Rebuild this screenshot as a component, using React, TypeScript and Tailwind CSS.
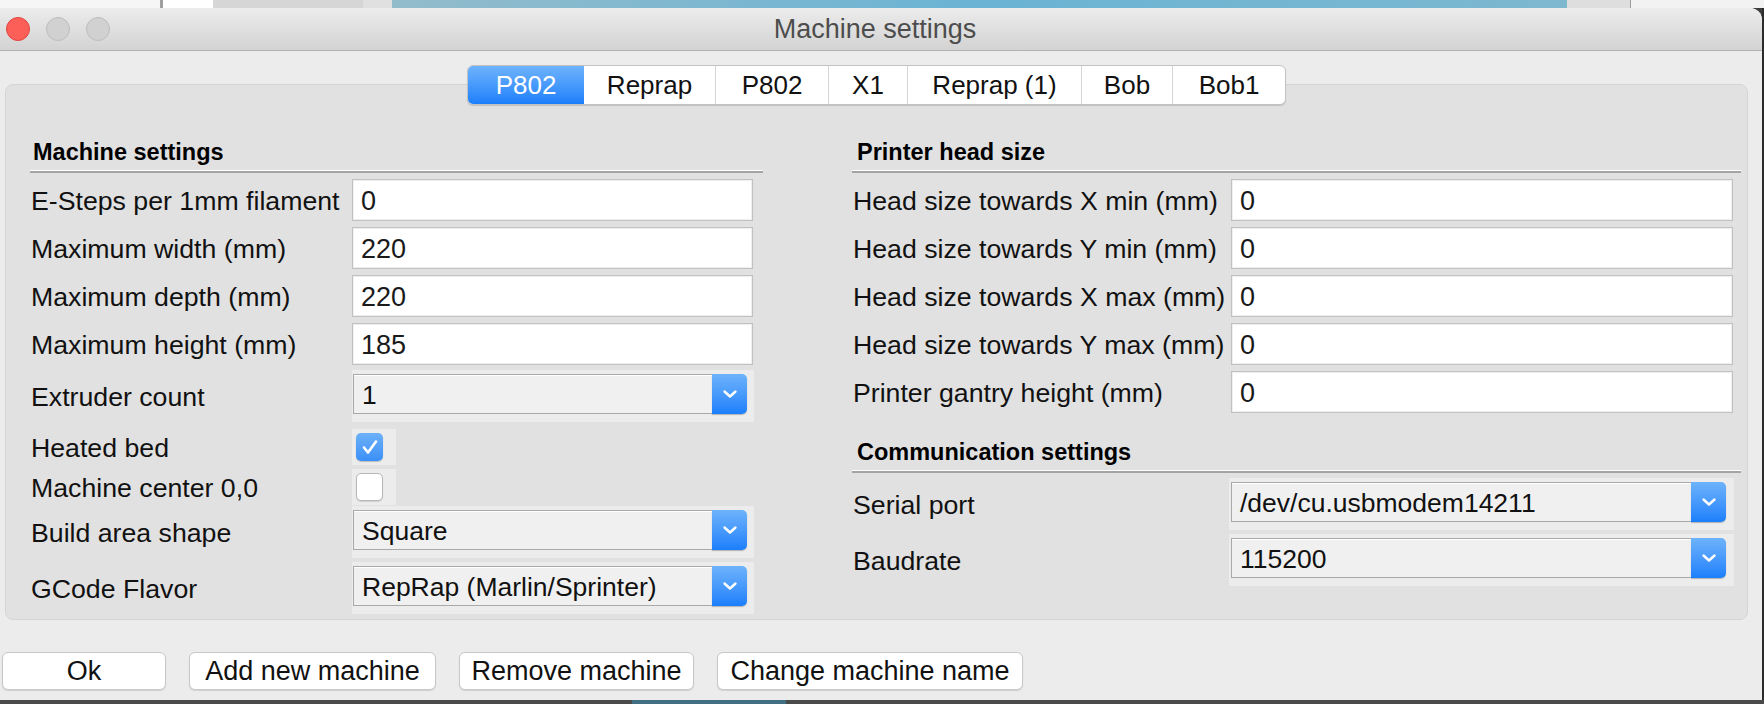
import type { ReactNode } from 'react'

type Row =
  | { kind: 'field'; label: string; value: string }
  | { kind: 'select'; label: string; value: string }
  | { kind: 'check'; label: string; checked: boolean }

const tabs = [
  { name: 'P802', width: 'w-[116px]', active: true },
  { name: 'Reprap', width: 'w-[131px]' },
  { name: 'P802', width: 'w-[113px]' },
  { name: 'X1', width: 'w-[79px]' },
  { name: 'Reprap (1)', width: 'w-[174px]' },
  { name: 'Bob', width: 'w-[91px]' },
  { name: 'Bob1', width: 'w-[113px]' },
]

const machineRows: Row[] = [
  { kind: 'field', label: 'E-Steps per 1mm filament', value: '0' },
  { kind: 'field', label: 'Maximum width (mm)', value: '220' },
  { kind: 'field', label: 'Maximum depth (mm)', value: '220' },
  { kind: 'field', label: 'Maximum height (mm)', value: '185' },
  { kind: 'select', label: 'Extruder count', value: '1' },
  { kind: 'check', label: 'Heated bed', checked: true },
  { kind: 'check', label: 'Machine center 0,0', checked: false },
  { kind: 'select', label: 'Build area shape', value: 'Square' },
  { kind: 'select', label: 'GCode Flavor', value: 'RepRap (Marlin/Sprinter)' },
]

const headRows = [
  { label: 'Head size towards X min (mm)', value: '0' },
  { label: 'Head size towards Y min (mm)', value: '0' },
  { label: 'Head size towards X max (mm)', value: '0' },
  { label: 'Head size towards Y max (mm)', value: '0' },
  { label: 'Printer gantry height (mm)', value: '0' },
]

function Chevron() {
  return (
    <svg width="16" height="10" viewBox="0 0 16 10">
      <path
        d="M2.5 2.5l5.5 5 5.5-5"
        fill="none"
        stroke="white"
        strokeWidth="2.4"
        strokeLinecap="round"
        strokeLinejoin="round"
      />
    </svg>
  )
}

function TextField({ value, className }: { value: string; className: string }) {
  return (
    <div
      className={`h-[42px] bg-white border border-[#c1c1c1] shadow-[inset_0_0_0_1px_#efefef] flex items-center pl-[8px] pt-[3px] text-[27px] text-[#1a1a1a] ${className}`}
    >
      {value}
    </div>
  )
}

function Select({ value, className }: { value: string; className: string }) {
  return (
    <div className={`flex h-[40px] ${className}`}>
      <div className="flex-1 flex items-center pl-[8px] pt-[4px] bg-[#f0f0f0] border border-r-0 border-[#a9a9a9] shadow-[inset_0_1px_0_#ffffff] text-[26.5px] text-[#111] whitespace-nowrap">
        {value}
      </div>
      <div className="w-[35px] flex items-center justify-center rounded-r-[5px] bg-linear-to-b from-[#6db3fb] to-[#1a7ffb] shadow-[0_1px_1px_rgba(0,0,0,0.25)]">
        <Chevron />
      </div>
    </div>
  )
}

function Checkbox({ checked }: { checked: boolean }) {
  if (checked) {
    return (
      <div className="w-[27px] h-[28px] rounded-[5px] bg-linear-to-b from-[#6cb1f9] to-[#3a8ff6] flex items-center justify-center shadow-[0_1px_1px_rgba(0,0,0,0.2)]">
        <svg width="20" height="20" viewBox="0 0 20 20">
          <path
            d="M4 10.5l4 5 8-11"
            fill="none"
            stroke="white"
            strokeWidth="2.6"
            strokeLinecap="round"
            strokeLinejoin="round"
          />
        </svg>
      </div>
    )
  }
  return (
    <div className="w-[27px] h-[28px] rounded-[5px] bg-white border border-[#b7b7b7] shadow-[0_1px_1px_rgba(0,0,0,0.12)]" />
  )
}

function SectionHeading({ title, className }: { title: string; className: string }) {
  return (
    <div className="flex flex-col">
      <div className={`h-[28px] leading-[28px] text-[23.5px] font-bold text-black ${className}`}>
        {title}
      </div>
      <div className="mt-[4px] h-px bg-white" />
      <div className="h-[2px] bg-[#a4a4a4]" />
    </div>
  )
}

function Label({ children }: { children: ReactNode }) {
  return (
    <div className="pl-[1px] pt-[2px] text-[26.7px] text-[#111] whitespace-nowrap">{children}</div>
  )
}

function MachineRow({ row, index }: { row: Row; index: number }) {
  const spacing =
    index === 0 ? '' : row.kind === 'field' ? 'mt-[6px]' : index === 4 ? 'mt-[5px]' : 'mt-[4px]'

  if (row.kind === 'field') {
    return (
      <div className={`grid grid-cols-[322px_1fr] items-center h-[42px] ${spacing}`}>
        <Label>{row.label}</Label>
        <TextField value={row.value} className="w-[401px]" />
      </div>
    )
  }
  if (row.kind === 'select') {
    return (
      <div className={`grid grid-cols-[322px_1fr] items-center h-[52px] ${spacing}`}>
        <Label>{row.label}</Label>
        <div className="w-[402px] h-[52px] bg-[#ececec] pl-[1px] pt-[4px]">
          <Select value={row.value} className="w-[394px]" />
        </div>
      </div>
    )
  }
  return (
    <div className={`grid grid-cols-[322px_1fr] items-center h-[36px] ${spacing}`}>
      <Label>{row.label}</Label>
      <div className="w-[44px] h-[36px] bg-[#ececec] flex items-center pl-[4px]">
        <Checkbox checked={row.checked} />
      </div>
    </div>
  )
}

function TitleBar() {
  return (
    <div className="h-[43px] shrink-0 border-b border-[#b3b3b3] bg-linear-to-b from-[#ececec] to-[#d3d3d3] grid grid-cols-[1fr_auto_1fr] items-center">
      <div className="flex items-center gap-[16px] pl-[6px]">
        <div className="w-[24px] h-[24px] rounded-full bg-[#fc5f58] border border-[#df4640]" />
        <div className="w-[24px] h-[24px] rounded-full bg-[#d1d1d1] border border-[#bdbdbd]" />
        <div className="w-[24px] h-[24px] rounded-full bg-[#d1d1d1] border border-[#bdbdbd]" />
      </div>
      <div className="pr-[12px] text-[27px] text-[#4d4d4d]">Machine settings</div>
      <div />
    </div>
  )
}

function Tabs() {
  return (
    <div className="relative z-10 flex justify-center pt-[14px] ml-[5px] mr-[14px] -mb-[21px]">
      <div className="flex h-[40px] rounded-[6px] border border-[#c3c3c3] bg-white shadow-[0_1px_1px_rgba(0,0,0,0.15)] overflow-hidden">
        {tabs.map((tab, i) =>
          tab.active ? (
            <div
              key={i}
              className={`${tab.width} flex items-center justify-center bg-linear-to-b from-[#6db3fb] to-[#1a7ffb] text-white text-[26px]`}
            >
              {tab.name}
            </div>
          ) : (
            <div
              key={i}
              className={`${tab.width} flex items-center justify-center text-[#111] text-[26px] ${i > 1 ? 'border-l border-[#d6d6d6]' : ''}`}
            >
              {tab.name}
            </div>
          )
        )}
      </div>
    </div>
  )
}

function Panel() {
  return (
    <div className="ml-[5px] mr-[14px] h-[536px] shrink-0 bg-[#e1e1e1] border border-[#d4d4d4] rounded-[8px] grid grid-cols-[733px_889px] gap-x-[89px] pl-[24px] pt-[53px] items-start">
      <div className="flex flex-col">
        <SectionHeading title="Machine settings" className="pl-[3px]" />
        <div className="mt-[6px] flex flex-col">
          {machineRows.map((row, i) => (
            <MachineRow key={row.label} row={row} index={i} />
          ))}
        </div>
      </div>

      <div className="flex flex-col">
        <SectionHeading title="Printer head size" className="pl-[5px]" />
        <div className="mt-[6px] flex flex-col gap-[6px]">
          {headRows.map((row) => (
            <div key={row.label} className="grid grid-cols-[377px_1fr] items-center h-[42px]">
              <Label>{row.label}</Label>
              <TextField value={row.value} className="ml-[2px] w-[502px]" />
            </div>
          ))}
        </div>

        <div className="mt-[25px]">
          <SectionHeading title="Communication settings" className="pl-[5px]" />
        </div>
        <div className="mt-[5px] grid grid-cols-[377px_1fr] items-center h-[52px]">
          <Label>Serial port</Label>
          <div className="w-[505px] h-[52px] bg-[#ececec] pl-[2px] pt-[4px]">
            <Select value="/dev/cu.usbmodem14211" className="w-[495px]" />
          </div>
        </div>
        <div className="mt-[4px] grid grid-cols-[377px_1fr] items-center h-[52px]">
          <Label>Baudrate</Label>
          <div className="w-[505px] h-[52px] bg-[#ececec] pl-[2px] pt-[4px]">
            <Select value="115200" className="w-[495px]" />
          </div>
        </div>
      </div>
    </div>
  )
}

function Buttons() {
  const buttons = [
    { label: 'Ok', width: 'w-[164px]' },
    { label: 'Add new machine', width: 'w-[247px]' },
    { label: 'Remove machine', width: 'w-[235px]' },
    { label: 'Change machine name', width: 'w-[306px]' },
  ]
  return (
    <div className="flex gap-[23px] pl-[2px] mt-[32px]">
      {buttons.map((b) => (
        <button
          key={b.label}
          type="button"
          className={`${b.width} h-[38px] bg-white border border-[#c8c8c8] rounded-[6px] shadow-[0_1px_1px_rgba(0,0,0,0.12)] text-[27px] text-[#111] flex items-center justify-center whitespace-nowrap`}
        >
          {b.label}
        </button>
      ))}
    </div>
  )
}

export default function App() {
  return (
    <div className="w-[1764px] h-[704px] overflow-hidden flex flex-col bg-[#3d3d3d] font-['Liberation_Sans',Arial,sans-serif]">
      {/* desktop behind the dialog */}
      <div className="h-[8px] shrink-0 flex">
        <div className="w-[160px] bg-[#f6f6f6]" />
        <div className="w-[3px] bg-[#a0a0a0]" />
        <div className="w-[50px] bg-white" />
        <div className="w-[150px] bg-[#d6d6d6]" />
        <div className="w-[29px] bg-[#e0e0e0]" />
        <div className="w-[1175px] bg-linear-to-r from-[#93bccb] via-[#6ab3d4] to-[#7db8cf]" />
        <div className="w-[63px] bg-[#dedede]" />
        <div className="w-[1px] bg-[#9c9c9c]" />
        <div className="flex-1 bg-[#f2f2f2]" />
      </div>

      <div className="flex h-[692px] shrink-0">
        <div className="w-[1762px] flex flex-col rounded-tr-[12px] overflow-hidden bg-[#ececec]">
          <TitleBar />
          <div className="flex-1 flex flex-col">
            <Tabs />
            <Panel />
            <Buttons />
          </div>
        </div>
        <div className="flex-1 bg-[#2c2c2c]" />
      </div>

      <div className="flex-1 flex">
        <div className="w-[632px] bg-[#4a4a4a]" />
        <div className="w-[154px] bg-[#3f6f80]" />
        <div className="flex-1 bg-[#4a4a4a]" />
      </div>
    </div>
  )
}
